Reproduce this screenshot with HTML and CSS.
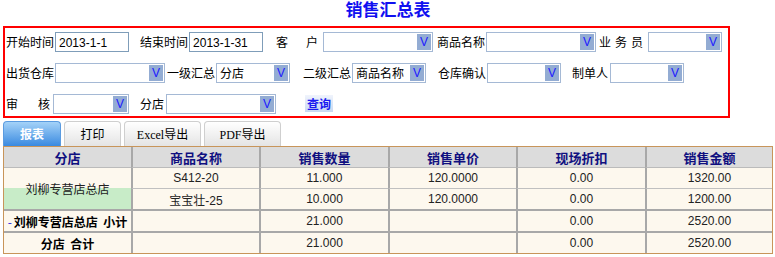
FILE: index.html
```html
<!DOCTYPE html>
<html lang="zh-CN">
<head>
    <meta charset="UTF-8">
    <title>销售汇总表</title>
    <link rel="stylesheet" href="styles.css">
</head>
<body>

<h1 class="title">销售汇总表</h1>

<div class="filter-box">
    <div class="filter-row">
        <span class="label">开始时间</span>
        <input class="text-input" type="text" value="2013-1-1">
        <span class="label gap-11">结束时间</span>
        <input class="text-input" type="text" value="2013-1-31">
        <span class="label gap-13 label-spread w-42">客<i></i>户</span>
        <div class="select w-110"><span class="arrow">V</span></div>
        <span class="label gap-4">商品名称</span>
        <div class="select w-110"><span class="arrow">V</span></div>
        <span class="label gap-3 label-spread w-44">业<i></i>务<i></i>员</span>
        <div class="select w-74"><span class="arrow">V</span></div>
    </div>
    <div class="filter-row">
        <span class="label">出货仓库</span>
        <div class="select w-110"><span class="arrow">V</span></div>
        <span class="label gap-2">一级汇总</span>
        <div class="select w-74"><span class="value">分店</span><span class="arrow">V</span></div>
        <span class="label gap-13">二级汇总</span>
        <div class="select w-74"><span class="value">商品名称</span><span class="arrow">V</span></div>
        <span class="label gap-12">仓库确认</span>
        <div class="select w-74"><span class="arrow">V</span></div>
        <span class="label gap-11">制单人</span>
        <div class="select w-74 nudge"><span class="arrow">V</span></div>
    </div>
    <div class="filter-row">
        <span class="label label-spread w-44 tight">审<i></i>核</span>
        <div class="select w-76"><span class="arrow">V</span></div>
        <span class="label gap-11">分店</span>
        <div class="select w-110 nudge"><span class="arrow">V</span></div>
        <button class="query-button">查询</button>
    </div>
</div>

<div class="tabs">
    <span class="tab active">报表</span>
    <span class="tab">打印</span>
    <span class="tab serif">Excel导出</span>
    <span class="tab serif">PDF导出</span>
</div>

<table class="report">
    <colgroup>
        <col style="width: 127px">
        <col style="width: 128px">
        <col style="width: 129px">
        <col style="width: 128px">
        <col style="width: 129px">
        <col style="width: 127px">
    </colgroup>
    <thead>
        <tr>
            <th>分店</th>
            <th>商品名称</th>
            <th>销售数量</th>
            <th>销售单价</th>
            <th>现场折扣</th>
            <th>销售金额</th>
        </tr>
    </thead>
    <tbody>
        <tr>
            <td rowspan="2" class="group-cell">刘柳专营店总店</td>
            <td>S412-20</td>
            <td>11.000</td>
            <td>120.0000</td>
            <td>0.00</td>
            <td>1320.00</td>
        </tr>
        <tr>
            <td>宝宝壮-25</td>
            <td>10.000</td>
            <td>120.0000</td>
            <td>0.00</td>
            <td>1200.00</td>
        </tr>
        <tr>
            <td class="bold"><span class="dash">-</span>刘柳专营店总店&nbsp;&nbsp;小计</td>
            <td></td>
            <td>21.000</td>
            <td></td>
            <td>0.00</td>
            <td>2520.00</td>
        </tr>
        <tr>
            <td class="bold">分店&nbsp;&nbsp;合计</td>
            <td></td>
            <td>21.000</td>
            <td></td>
            <td>0.00</td>
            <td>2520.00</td>
        </tr>
    </tbody>
</table>

</body>
</html>
```

FILE: styles.css
```css
body {
    margin: 0;
    padding: 0;
    font-family: "Liberation Sans", "Noto Sans CJK SC", sans-serif;
    font-size: 12px;
    color: #000;
    background-color: #fff;
    width: 775px;
}
.title {
    margin: 0;
    padding-top: 1px;
    height: 25px;
    text-align: center;
    font-size: 17px;
    font-weight: bold;
    color: #1010f0;
    line-height: 20px;
    padding-left: 1px;
}
.filter-box {
    margin-left: 3px;
    width: 722px;
    height: 85px;
    border: 2px solid #f00;
    padding: 3px 0 0 1px;
}
.filter-row {
    display: flex;
    align-items: center;
    height: 21px;
    margin-bottom: 10px;
}
.label {
    font-family: "Noto Sans CJK SC", sans-serif;
    font-size: 12px;
    line-height: 16px;
    margin-right: 1px;
    white-space: nowrap;
}
.label-spread {
    display: flex;
    justify-content: space-between;
}
.label-spread i {
    flex: 0;
}
.w-42 {
    width: 42px;
    margin-right: 5px;
}
.w-44 {
    width: 44px;
    margin-right: 5px;
}
.w-44.tight {
    margin-right: 3px;
}
.gap-2 {
    margin-left: 2px;
}
.gap-3 {
    margin-left: 3px;
}
.gap-4 {
    margin-left: 4px;
}
.gap-11 {
    margin-left: 11px;
}
.gap-12 {
    margin-left: 12px;
}
.gap-13 {
    margin-left: 13px;
}
.nudge {
    margin-left: 1px;
}
.text-input {
    box-sizing: border-box;
    width: 74px;
    height: 20px;
    margin: 0;
    padding: 2px 3px 0;
    border: 1px solid #7f9db9;
    font-family: "Liberation Sans", sans-serif;
    font-size: 12px;
}
.select {
    box-sizing: border-box;
    position: relative;
    height: 20px;
    border: 1px solid #a5b9d5;
    background-color: #fff;
}
.w-110 {
    width: 110px;
}
.w-74 {
    width: 74px;
}
.w-76 {
    width: 76px;
}
.select .value {
    display: block;
    padding: 1px 0 0 3px;
    font-family: "Noto Sans CJK SC", sans-serif;
    font-size: 12px;
    line-height: 16px;
}
.select .arrow {
    position: absolute;
    right: 1px;
    top: 1px;
    width: 14px;
    height: 16px;
    background-color: #93acd3;
    color: #1a1aff;
    font-family: "Liberation Sans", sans-serif;
    font-size: 12px;
    line-height: 17px;
    text-align: center;
}
.query-button {
    margin-left: 29px;
    padding: 0 2px;
    height: 17px;
    border: none;
    background: linear-gradient(#f0f4fc, #c8d8f2);
    color: #1a1af0;
    font-family: "Noto Sans CJK SC", sans-serif;
    font-size: 12px;
    font-weight: bold;
    line-height: 17px;
}
.tabs {
    display: flex;
    gap: 3px;
    margin: 3px 0 0 3px;
    height: 25px;
}
.tab {
    box-sizing: border-box;
    width: 57px;
    height: 25px;
    padding-top: 3px;
    border: 1px solid #cfcfcf;
    border-bottom: none;
    border-radius: 4px 4px 0 0;
    background: linear-gradient(#ffffff, #e4e4e4);
    text-align: center;
    font-family: "Noto Sans CJK SC", sans-serif;
    font-size: 12px;
}
.tab.active {
    width: 58px;
    border-color: #5a9be0;
    background: linear-gradient(#a4d2f8, #3a8ae0);
    color: #fff;
    font-weight: bold;
}
.tab.serif {
    width: 77px;
    font-family: "Liberation Serif", "Noto Sans CJK SC", serif;
}
.report {
    margin-left: 3px;
    width: 770px;
    border: 1px solid #c8955a;
    border-spacing: 0;
    table-layout: fixed;
}
.report th,
.report td {
    text-align: center;
    border-left: 2px solid #a8a8a8;
    border-top: 2px solid #a8a8a8;
    padding: 0;
}
.report th:first-child,
.report td:first-child {
    border-left: none;
}
.report th {
    height: 20px;
    border-top: none;
    background-color: #dcdcdc;
    color: #101080;
    font-family: "Noto Sans CJK SC", sans-serif;
    font-size: 13px;
    font-weight: bold;
}
.report td {
    height: 20px;
    background-color: #fdf8ee;
    color: #222;
}
.report tbody tr:first-child td {
    border-top: 1px solid #bbb;
}
.report .group-cell {
    background: linear-gradient(#fdf8ee 50%, #c8ecc8 50%);
}
.report tr:nth-child(2) td {
    border-top: 1px solid #c0c0c0;
}
.report tr:nth-child(2) td:first-child {
    border-left: 2px solid #a8a8a8;
}
.report td.bold {
    font-weight: bold;
    color: #000;
    font-family: "Noto Sans CJK SC", sans-serif;
}
.dash {
    color: #2020e0;
    font-weight: normal;
    margin-right: 2px;
}
```
